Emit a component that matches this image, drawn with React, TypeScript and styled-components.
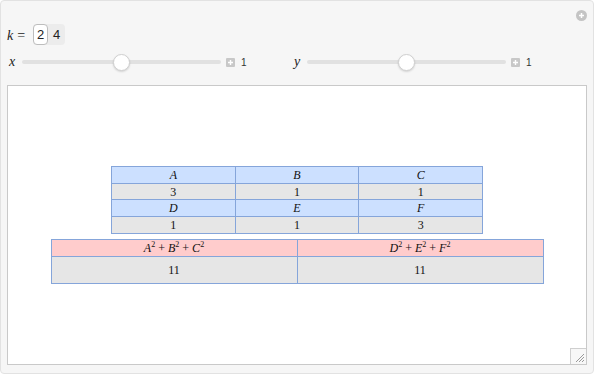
import React from "react";
import styled, { createGlobalStyle } from "styled-components";

const Global = createGlobalStyle`
  html, body { margin: 0; padding: 0; background: #ffffff; }
  * { box-sizing: border-box; }
`;

const Frame = styled.div`
  position: relative;
  width: 594px;
  height: 374px;
  background: #f6f6f6;
  border: 1px solid #e2e2e2;
  border-radius: 4px;
  padding: 23px 6px 0 6px;
  display: flex;
  flex-direction: column;
`;

const AddIcon = styled.div`
  position: absolute;
  top: 9px;
  right: 6px;
  width: 11px;
  height: 11px;
  border-radius: 50%;
  background: #c4c4c4;
  display: flex;
  align-items: center;
  justify-content: center;
`;

const Controls = styled.div`
  display: flex;
  flex-direction: column;
  gap: 8px;
`;

const SetterRow = styled.div`
  display: flex;
  align-items: center;
  height: 21px;
  gap: 8px;
`;

const VarLabel = styled.span`
  font-family: "Liberation Serif", serif;
  font-style: italic;
  font-size: 14px;
  color: #222;
`;

const Eq = styled.span`
  font-family: "Liberation Serif", serif;
  font-size: 14px;
  color: #222;
  margin-left: 4px;
`;

const SetterGroup = styled.div`
  display: flex;
  background: #ececec;
  border-radius: 4px;
  height: 21px;
`;

const SetterButton = styled.div<{ $active?: boolean }>`
  font-family: "Liberation Sans", sans-serif;
  font-size: 13px;
  color: #222;
  width: ${(p) => (p.$active ? "15px" : "17px")};
  display: flex;
  align-items: center;
  justify-content: center;
  background: ${(p) => (p.$active ? "#ffffff" : "transparent")};
  border: ${(p) => (p.$active ? "1px solid #bdbdbd" : "none")};
  border-radius: 4px;
`;

const SliderRow = styled.div`
  display: flex;
  align-items: center;
  height: 18px;
`;

const SliderGroup = styled.div<{ $width: number }>`
  display: flex;
  align-items: center;
  width: ${(p) => p.$width}px;
`;

const SliderLabel = styled.span`
  font-family: "Liberation Serif", serif;
  font-style: italic;
  font-size: 14px;
  color: #222;
  width: 15px;
  padding-left: 2px;
`;

const Track = styled.div`
  position: relative;
  width: 199px;
  height: 4px;
  border-radius: 2px;
  background: #e1e1e1;
`;

const Thumb = styled.div`
  position: absolute;
  top: 50%;
  width: 17px;
  height: 17px;
  margin-left: -8.5px;
  margin-top: -8.5px;
  border-radius: 50%;
  background: #ffffff;
  border: 1px solid #d0d0d0;
  box-shadow: 0 1px 2px rgba(0, 0, 0, 0.15);
`;

const PlusBox = styled.div`
  width: 9px;
  height: 9px;
  margin-left: 5px;
  background: #c8c8c8;
  border-radius: 1px;
  display: flex;
  align-items: center;
  justify-content: center;
`;

const SliderValue = styled.span`
  font-family: "Liberation Sans", sans-serif;
  font-size: 10px;
  color: #333;
  margin-left: 6px;
`;

const Output = styled.div`
  position: relative;
  margin-top: 14px;
  width: 580px;
  height: 280px;
  background: #ffffff;
  border: 1px solid #c9c9c9;
  display: flex;
  flex-direction: column;
  align-items: center;
  justify-content: center;
  gap: 5px;
`;

const Grip = styled.div`
  position: absolute;
  right: 0;
  bottom: 0;
  width: 16px;
  height: 16px;
  border-left: 1px solid #cfcfcf;
  border-top: 1px solid #cfcfcf;
  background: #f7f7f7;
  display: flex;
  align-items: center;
  justify-content: center;
`;

const Grid = styled.div<{ $cols: number; $width: number; $rows: string }>`
  display: grid;
  grid-template-columns: repeat(${(p) => p.$cols}, 1fr);
  grid-template-rows: ${(p) => p.$rows};
  gap: 1px;
  width: ${(p) => p.$width}px;
  background: #85a5da;
  border: 1px solid #85a5da;
`;

const Cell = styled.div<{ $kind: "head" | "pink" | "data" }>`
  background: ${(p) =>
    p.$kind === "head" ? "#cce0ff" : p.$kind === "pink" ? "#ffcccc" : "#e6e6e6"};
  font-family: "Liberation Serif", "Times New Roman", serif;
  font-size: 12px;
  font-style: ${(p) => (p.$kind === "data" ? "normal" : "italic")};
  color: #111;
  display: flex;
  align-items: center;
  justify-content: center;
  line-height: 1;
`;

const Sup = styled.sup`
  font-size: 8px;
  font-style: normal;
  vertical-align: 5px;
  line-height: 0;
`;

const Plain = styled.span`
  font-style: normal;
  margin: 0 3px;
`;

function Slider({ label, pos, width }: { label: string; pos: number; width: number }) {
  return (
    <SliderGroup $width={width}>
      <SliderLabel>{label}</SliderLabel>
      <Track>
        <Thumb style={{ left: `${pos * 100}%` }} />
      </Track>
      <PlusBox>
        <svg width="7" height="7" viewBox="0 0 7 7">
          <path d="M3.5 1v5M1 3.5h5" stroke="#fff" strokeWidth="1.4" />
        </svg>
      </PlusBox>
      <SliderValue>1</SliderValue>
    </SliderGroup>
  );
}

function SumExpr({ letters }: { letters: string[] }) {
  return (
    <span>
      {letters.map((l, i) => (
        <React.Fragment key={l}>
          {i > 0 && <Plain>+</Plain>}
          {l}
          <Sup>2</Sup>
        </React.Fragment>
      ))}
    </span>
  );
}

export default function App() {
  const rows1: { kind: "head" | "data"; vals: string[] }[] = [
    { kind: "head", vals: ["A", "B", "C"] },
    { kind: "data", vals: ["3", "1", "1"] },
    { kind: "head", vals: ["D", "E", "F"] },
    { kind: "data", vals: ["1", "1", "3"] },
  ];
  return (
    <>
      <Global />
      <Frame>
        <AddIcon>
          <svg width="7" height="7" viewBox="0 0 7 7">
            <path d="M3.5 1v5M1 3.5h5" stroke="#fff" strokeWidth="1.5" />
          </svg>
        </AddIcon>
        <Controls>
          <SetterRow>
            <span>
              <VarLabel>k</VarLabel>
              <Eq>=</Eq>
            </span>
            <SetterGroup>
              <SetterButton $active>2</SetterButton>
              <SetterButton>4</SetterButton>
            </SetterGroup>
          </SetterRow>
          <SliderRow>
            <Slider label="x" pos={0.5} width={285} />
            <Slider label="y" pos={0.5} width={290} />
          </SliderRow>
        </Controls>
        <Output>
          <Grid $cols={3} $width={372} $rows="16px 15px 16px 16px">
            {rows1.map((r, ri) =>
              r.vals.map((v, ci) => (
                <Cell key={`${ri}-${ci}`} $kind={r.kind}>
                  {v}
                </Cell>
              ))
            )}
          </Grid>
          <Grid $cols={2} $width={493} $rows="16px 26px">
            <Cell $kind="pink">
              <SumExpr letters={["A", "B", "C"]} />
            </Cell>
            <Cell $kind="pink">
              <SumExpr letters={["D", "E", "F"]} />
            </Cell>
            <Cell $kind="data">11</Cell>
            <Cell $kind="data">11</Cell>
          </Grid>
          <Grip>
            <svg width="12" height="12" viewBox="0 0 12 12">
              <path d="M11 3L3 11M11 6L6 11M11 9L9 11" stroke="#9a9a9a" strokeWidth="1" />
            </svg>
          </Grip>
        </Output>
      </Frame>
    </>
  );
}
